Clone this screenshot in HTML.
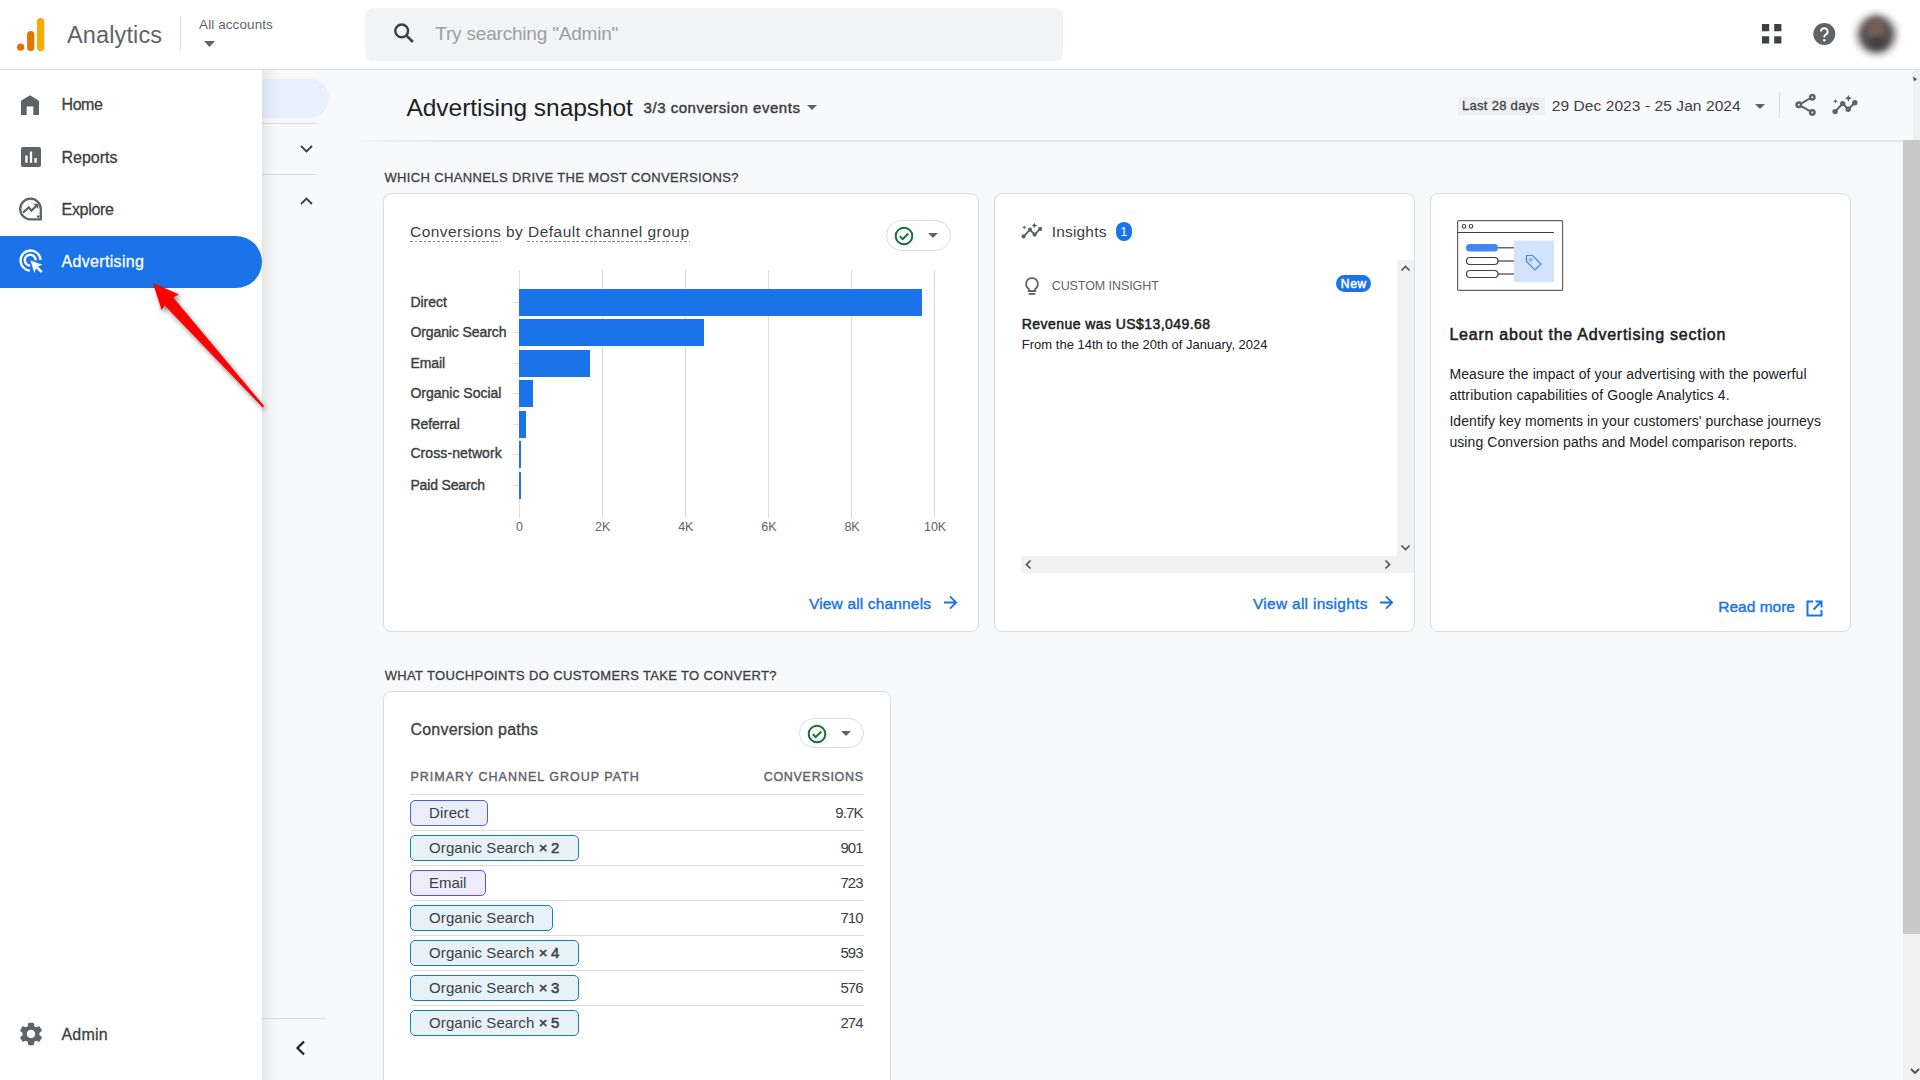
<!DOCTYPE html>
<html><head><meta charset="utf-8">
<style>
*{box-sizing:border-box;margin:0;padding:0}
html,body{width:1920px;height:1080px;overflow:hidden;background:#f8f9fa;font-family:"Liberation Sans",sans-serif;color:#3c4043}
.a{position:absolute}
.tx{white-space:pre}
svg.a{overflow:visible}
</style></head><body>
<div class="a tx" style="left:384.40px;top:168px;font-size:13px;line-height:19px;color:#3c4043;-webkit-text-stroke:0.3px #3c4043;letter-spacing:0.366px;">WHICH CHANNELS DRIVE THE MOST CONVERSIONS?</div>
<div class="a tx" style="left:384.70px;top:666px;font-size:13px;line-height:19px;color:#3c4043;-webkit-text-stroke:0.3px #3c4043;letter-spacing:0.349px;">WHAT TOUCHPOINTS DO CUSTOMERS TAKE TO CONVERT?</div>
<div class="a" style="left:383px;top:193px;width:596px;height:439px;background:#fff;border:1px solid #dadce0;border-radius:8px;"></div>
<div class="a tx" style="left:410.00px;top:221px;font-size:15.5px;line-height:21px;color:#3c4043;letter-spacing:0.464px;">Conversions by Default channel group</div>
<div class="a" style="left:410px;top:241px;width:91px;height:1px;background:repeating-linear-gradient(90deg,#80868b 0 2.5px,transparent 2.5px 4.5px)"></div>
<div class="a" style="left:527px;top:241px;width:163px;height:1px;background:repeating-linear-gradient(90deg,#80868b 0 2.5px,transparent 2.5px 4.5px)"></div>
<div class="a" style="left:886px;top:220px;width:65px;height:31px;background:#fff;border:1px solid #dadce0;border-radius:15.5px;"></div>
<svg class="a" style="left:894px;top:226px;" width="20" height="20" viewBox="0 0 20 20"><circle cx="10" cy="10" r="8.3" fill="none" stroke="#137333" stroke-width="2"/><path d="M5.8 10.2l2.9 2.9 5.6-5.6" fill="none" stroke="#137333" stroke-width="2"/></svg>
<svg class="a" style="left:928px;top:233px;" width="10" height="5" viewBox="0 0 10 5"><path d="M0 0h10L5 5z" fill="#5f6368"/></svg>
<div class="a" style="left:519px;top:270px;width:1px;height:248px;background:#dadce0;"></div>
<div class="a" style="left:602px;top:270px;width:1px;height:248px;background:#dadce0;"></div>
<div class="a" style="left:685px;top:270px;width:1px;height:248px;background:#dadce0;"></div>
<div class="a" style="left:768px;top:270px;width:1px;height:248px;background:#dadce0;"></div>
<div class="a" style="left:851px;top:270px;width:1px;height:248px;background:#dadce0;"></div>
<div class="a" style="left:934px;top:270px;width:1px;height:248px;background:#dadce0;"></div>
<div class="a" style="left:513px;top:302px;width:6px;height:1px;background:#dadce0;"></div>
<div class="a" style="left:519px;top:289px;width:403px;height:27px;background:#1a73e8;"></div>
<div class="a tx" style="left:410.40px;top:292px;font-size:14px;line-height:20px;color:#3c4043;-webkit-text-stroke:0.4px #3c4043;letter-spacing:-0.030px;">Direct</div>
<div class="a" style="left:513px;top:332px;width:6px;height:1px;background:#dadce0;"></div>
<div class="a" style="left:519px;top:319px;width:185px;height:27px;background:#1a73e8;"></div>
<div class="a tx" style="left:410.40px;top:322px;font-size:14px;line-height:20px;color:#3c4043;-webkit-text-stroke:0.4px #3c4043;letter-spacing:-0.096px;">Organic Search</div>
<div class="a" style="left:513px;top:363px;width:6px;height:1px;background:#dadce0;"></div>
<div class="a" style="left:519px;top:350px;width:71px;height:27px;background:#1a73e8;"></div>
<div class="a tx" style="left:410.40px;top:353px;font-size:14px;line-height:20px;color:#3c4043;-webkit-text-stroke:0.4px #3c4043;letter-spacing:-0.075px;">Email</div>
<div class="a" style="left:513px;top:393px;width:6px;height:1px;background:#dadce0;"></div>
<div class="a" style="left:519px;top:380px;width:14px;height:27px;background:#1a73e8;"></div>
<div class="a tx" style="left:410.40px;top:383px;font-size:14px;line-height:20px;color:#3c4043;-webkit-text-stroke:0.4px #3c4043;">Organic Social</div>
<div class="a" style="left:513px;top:424px;width:6px;height:1px;background:#dadce0;"></div>
<div class="a" style="left:519px;top:411px;width:7px;height:27px;background:#1a73e8;"></div>
<div class="a tx" style="left:410.40px;top:414px;font-size:14px;line-height:20px;color:#3c4043;-webkit-text-stroke:0.4px #3c4043;letter-spacing:-0.064px;">Referral</div>
<div class="a" style="left:513px;top:454px;width:6px;height:1px;background:#dadce0;"></div>
<div class="a" style="left:519px;top:441px;width:2px;height:27px;background:#1a73e8;"></div>
<div class="a tx" style="left:410.40px;top:443px;font-size:14px;line-height:20px;color:#3c4043;-webkit-text-stroke:0.4px #3c4043;letter-spacing:0.092px;">Cross-network</div>
<div class="a" style="left:513px;top:485px;width:6px;height:1px;background:#dadce0;"></div>
<div class="a" style="left:519px;top:472px;width:2px;height:27px;background:#1a73e8;"></div>
<div class="a tx" style="left:410.40px;top:475px;font-size:14px;line-height:20px;color:#3c4043;-webkit-text-stroke:0.4px #3c4043;letter-spacing:-0.165px;">Paid Search</div>
<div class="a tx" style="left:516.10px;top:518px;font-size:12.5px;line-height:18px;color:#5f6368;">0</div>
<div class="a tx" style="left:595.08px;top:518px;font-size:12.5px;line-height:18px;color:#5f6368;">2K</div>
<div class="a tx" style="left:678.17px;top:518px;font-size:12.5px;line-height:18px;color:#5f6368;">4K</div>
<div class="a tx" style="left:761.27px;top:518px;font-size:12.5px;line-height:18px;color:#5f6368;">6K</div>
<div class="a tx" style="left:844.38px;top:518px;font-size:12.5px;line-height:18px;color:#5f6368;">8K</div>
<div class="a tx" style="left:923.98px;top:518px;font-size:12.5px;line-height:18px;color:#5f6368;">10K</div>
<div class="a tx" style="left:809.00px;top:593px;font-size:15.5px;line-height:21px;color:#1a73e8;-webkit-text-stroke:0.4px #1a73e8;letter-spacing:0.156px;">View all channels</div>
<svg class="a" style="left:943px;top:595px;" width="15" height="15" viewBox="0 0 15 15"><path d="M1 7.5h12.3M7 1.3l6.2 6.2L7 13.7" fill="none" stroke="#1a73e8" stroke-width="1.8"/></svg>
<div class="a" style="left:994px;top:193px;width:421px;height:439px;background:#fff;border:1px solid #dadce0;border-radius:8px;"></div>
<svg class="a" style="left:1020px;top:220px;" width="24" height="20" viewBox="0 0 24 20"><path d="M3.6 16.4L10 9.6 14.6 14.6 20.1 8.9" fill="none" stroke="#5f6368" stroke-width="1.8"/><circle cx="3.6" cy="16.4" r="2.1" fill="#5f6368"/><circle cx="10" cy="9.6" r="2.1" fill="#5f6368"/><circle cx="14.6" cy="14.6" r="2.1" fill="#5f6368"/><circle cx="20.1" cy="8.9" r="2.1" fill="#5f6368"/><path d="M14.4 2.7Q14.886000000000001 4.914000000000001 17.1 5.4Q14.886000000000001 5.886 14.4 8.100000000000001Q13.914 5.886 11.7 5.4Q13.914 4.914000000000001 14.4 2.7Z" fill="#5f6368"/><path d="M4.3 5.6Q4.6419999999999995 7.158 6.199999999999999 7.5Q4.6419999999999995 7.842 4.3 9.4Q3.9579999999999997 7.842 2.4 7.5Q3.9579999999999997 7.158 4.3 5.6Z" fill="#5f6368"/></svg>
<div class="a tx" style="left:1051.70px;top:221px;font-size:15.5px;line-height:21px;color:#3c4043;letter-spacing:0.186px;">Insights</div>
<div class="a" style="left:1116px;top:222px;width:16px;height:19px;background:#1a73e8;border-radius:8px;"></div>
<div class="a tx" style="left:1120.62px;top:223px;font-size:12px;line-height:18px;color:#fff;">1</div>
<div class="a" style="left:1397px;top:260px;width:17px;height:296px;background:#f1f1f1;"></div>
<svg class="a" style="left:1401px;top:265px;" width="9" height="6" viewBox="0 0 9 6"><path d="M0.5 5.5L4.5 1.5l4 4" fill="none" stroke="#505050" stroke-width="1.6"/></svg>
<svg class="a" style="left:1401px;top:545px;" width="9" height="6" viewBox="0 0 9 6"><path d="M0.5 0.5L4.5 4.5l4-4" fill="none" stroke="#505050" stroke-width="1.6"/></svg>
<div class="a" style="left:1021px;top:556px;width:393px;height:17px;background:#f1f1f1;"></div>
<svg class="a" style="left:1025px;top:560px;" width="6" height="9" viewBox="0 0 6 9"><path d="M5.5 0.5L1.5 4.5l4 4" fill="none" stroke="#505050" stroke-width="1.6"/></svg>
<svg class="a" style="left:1385px;top:560px;" width="6" height="9" viewBox="0 0 6 9"><path d="M0.5 0.5L4.5 4.5l-4 4" fill="none" stroke="#505050" stroke-width="1.6"/></svg>
<svg class="a" style="left:1024px;top:277px;" width="16" height="19" viewBox="0 0 16 19"><path d="M8 1.2a5.8 5.8 0 0 0-3.3 10.6V14h6.6v-2.2A5.8 5.8 0 0 0 8 1.2z" fill="none" stroke="#5f6368" stroke-width="1.8"/><rect x="4.7" y="16" width="6.6" height="1.8" fill="#5f6368"/></svg>
<div class="a tx" style="left:1051.70px;top:277px;font-size:12.5px;line-height:18px;color:#5f6368;letter-spacing:-0.077px;">CUSTOM INSIGHT</div>
<div class="a" style="left:1336px;top:275px;width:35px;height:17px;background:#1a73e8;border-radius:9px;"></div>
<div class="a tx" style="left:1340.85px;top:275px;font-size:12px;line-height:18px;color:#fff;-webkit-text-stroke:0.5px #fff;letter-spacing:0.650px;">New</div>
<div class="a tx" style="left:1021.80px;top:314px;font-size:14px;line-height:20px;color:#202124;-webkit-text-stroke:0.5px #202124;letter-spacing:0.433px;">Revenue was US$13,049.68</div>
<div class="a tx" style="left:1021.80px;top:335px;font-size:13px;line-height:19px;color:#202124;letter-spacing:0.007px;">From the 14th to the 20th of January, 2024</div>
<div class="a tx" style="left:1253.00px;top:593px;font-size:15.5px;line-height:21px;color:#1a73e8;-webkit-text-stroke:0.4px #1a73e8;letter-spacing:0.275px;">View all insights</div>
<svg class="a" style="left:1379px;top:595px;" width="15" height="15" viewBox="0 0 15 15"><path d="M1 7.5h12.3M7 1.3l6.2 6.2L7 13.7" fill="none" stroke="#1a73e8" stroke-width="1.8"/></svg>
<div class="a" style="left:1430px;top:193px;width:421px;height:439px;background:#fff;border:1px solid #dadce0;border-radius:8px;"></div>
<svg class="a" style="left:1456px;top:219px;" width="108" height="73" viewBox="0 0 108 73"><rect x="1.6" y="1.6" width="105" height="69.8" rx="1" fill="#fff" stroke="#5f6368" stroke-width="1.2"/>
<line x1="1.6" y1="13.5" x2="98" y2="13.5" stroke="#3c4043" stroke-width="1.1"/>
<circle cx="8" cy="7.3" r="1.8" fill="none" stroke="#3c4043" stroke-width="1.1"/><circle cx="15" cy="7.3" r="1.8" fill="none" stroke="#3c4043" stroke-width="1.1"/>
<rect x="58" y="21.5" width="40" height="41.5" fill="#d2e3fc"/>
<rect x="10" y="25" width="32" height="7.5" rx="3.75" fill="#4285f4"/>
<line x1="42" y1="28.8" x2="58" y2="28.8" stroke="#3c4043" stroke-width="1.2"/>
<rect x="10.5" y="38.5" width="31.5" height="7" rx="3.5" fill="#fff" stroke="#3c4043" stroke-width="1.2"/>
<line x1="42" y1="42" x2="58" y2="42" stroke="#3c4043" stroke-width="1.2"/>
<rect x="10.5" y="51.5" width="31.5" height="7" rx="3.5" fill="#fff" stroke="#3c4043" stroke-width="1.2"/>
<line x1="42" y1="55" x2="58" y2="55" stroke="#3c4043" stroke-width="1.2"/>
<path d="M70.5 36.5h6l8.5 8.5-6 6-8.5-8.5z" fill="none" stroke="#4285f4" stroke-width="1.2"/><circle cx="74.6" cy="40.8" r="1.3" fill="none" stroke="#4285f4" stroke-width="0.9"/></svg>
<div class="a tx" style="left:1449.40px;top:324px;font-size:16px;line-height:21px;color:#202124;-webkit-text-stroke:0.55px #202124;letter-spacing:0.765px;">Learn about the Advertising section</div>
<div class="a tx" style="left:1449.40px;top:364px;font-size:14px;line-height:20px;color:#202124;letter-spacing:0.128px;">Measure the impact of your advertising with the powerful</div>
<div class="a tx" style="left:1449.40px;top:385px;font-size:14px;line-height:20px;color:#202124;letter-spacing:0.135px;">attribution capabilities of Google Analytics 4.</div>
<div class="a tx" style="left:1449.40px;top:411px;font-size:14px;line-height:20px;color:#202124;letter-spacing:0.070px;">Identify key moments in your customers' purchase journeys</div>
<div class="a tx" style="left:1449.40px;top:432px;font-size:14px;line-height:20px;color:#202124;letter-spacing:0.091px;">using Conversion paths and Model comparison reports.</div>
<div class="a tx" style="left:1718.30px;top:596px;font-size:15.5px;line-height:21px;color:#1a73e8;-webkit-text-stroke:0.4px #1a73e8;letter-spacing:-0.006px;">Read more</div>
<svg class="a" style="left:1806px;top:600px;" width="17" height="17" viewBox="0 0 17 17"><path d="M7 1.5H1.5v14h14V10" fill="none" stroke="#1a73e8" stroke-width="2"/><path d="M9.5 1.5h6v6M15.5 1.5L7.5 9.5" fill="none" stroke="#1a73e8" stroke-width="2"/></svg>
<div class="a" style="left:383px;top:691px;width:508px;height:420px;background:#fff;border:1px solid #dadce0;border-radius:8px;"></div>
<div class="a tx" style="left:410.50px;top:719px;font-size:16px;line-height:21px;color:#3c4043;-webkit-text-stroke:0.3px #3c4043;letter-spacing:0.200px;">Conversion paths</div>
<div class="a" style="left:799px;top:718px;width:65px;height:30px;background:#fff;border:1px solid #dadce0;border-radius:15.0px;"></div>
<svg class="a" style="left:807px;top:724px;" width="20" height="20" viewBox="0 0 20 20"><circle cx="10" cy="10" r="8.3" fill="none" stroke="#137333" stroke-width="2"/><path d="M5.8 10.2l2.9 2.9 5.6-5.6" fill="none" stroke="#137333" stroke-width="2"/></svg>
<svg class="a" style="left:841px;top:731px;" width="10" height="5" viewBox="0 0 10 5"><path d="M0 0h10L5 5z" fill="#5f6368"/></svg>
<div class="a tx" style="left:410.50px;top:768px;font-size:12.5px;line-height:18px;color:#5f6368;-webkit-text-stroke:0.4px #5f6368;letter-spacing:1.002px;">PRIMARY CHANNEL GROUP PATH</div>
<div class="a tx" style="left:763.70px;top:768px;font-size:12.5px;line-height:18px;color:#5f6368;-webkit-text-stroke:0.4px #5f6368;letter-spacing:0.705px;">CONVERSIONS</div>
<div class="a" style="left:410px;top:794px;width:454px;height:1px;background:#dadce0;"></div>
<div class="a" style="left:410px;top:800px;width:78px;height:26px;background:#eaedfa;border:1px solid #4a63e6;border-radius:5px;"></div>
<div class="a tx" style="left:429.10px;top:802px;font-size:15px;line-height:21px;color:#3c4043;letter-spacing:0.130px;">Direct</div>
<div class="a tx" style="left:835.30px;top:802px;font-size:15px;line-height:21px;color:#3c4043;letter-spacing:-0.850px;">9.7K</div>
<div class="a" style="left:410px;top:830px;width:454px;height:1px;background:#dadce0;"></div>
<div class="a" style="left:410px;top:835px;width:169px;height:26px;background:#e6f1f8;border:1px solid #1a7bbd;border-radius:5px;"></div>
<div class="a tx" style="left:429.10px;top:837px;font-size:15px;line-height:21px;color:#3c4043;letter-spacing:0.073px;">Organic Search</div>
<div class="a tx" style="left:538.75px;top:837px;font-size:15px;line-height:21px;color:#3c4043;-webkit-text-stroke:0.5px #3c4043;letter-spacing:-0.375px;">× 2</div>
<div class="a tx" style="left:840.50px;top:837px;font-size:15px;line-height:21px;color:#3c4043;letter-spacing:-1.000px;">901</div>
<div class="a" style="left:410px;top:865px;width:454px;height:1px;background:#dadce0;"></div>
<div class="a" style="left:410px;top:870px;width:76px;height:26px;background:#eeecfb;border:1px solid #5b4cf0;border-radius:5px;"></div>
<div class="a tx" style="left:429.10px;top:872px;font-size:15px;line-height:21px;color:#3c4043;letter-spacing:-0.075px;">Email</div>
<div class="a tx" style="left:840.50px;top:872px;font-size:15px;line-height:21px;color:#3c4043;letter-spacing:-1.000px;">723</div>
<div class="a" style="left:410px;top:900px;width:454px;height:1px;background:#dadce0;"></div>
<div class="a" style="left:410px;top:905px;width:143px;height:26px;background:#e6f1f8;border:1px solid #1a7bbd;border-radius:5px;"></div>
<div class="a tx" style="left:429.10px;top:907px;font-size:15px;line-height:21px;color:#3c4043;letter-spacing:0.073px;">Organic Search</div>
<div class="a tx" style="left:840.50px;top:907px;font-size:15px;line-height:21px;color:#3c4043;letter-spacing:-1.000px;">710</div>
<div class="a" style="left:410px;top:935px;width:454px;height:1px;background:#dadce0;"></div>
<div class="a" style="left:410px;top:940px;width:169px;height:26px;background:#e6f1f8;border:1px solid #1a7bbd;border-radius:5px;"></div>
<div class="a tx" style="left:429.10px;top:942px;font-size:15px;line-height:21px;color:#3c4043;letter-spacing:0.073px;">Organic Search</div>
<div class="a tx" style="left:538.75px;top:942px;font-size:15px;line-height:21px;color:#3c4043;-webkit-text-stroke:0.5px #3c4043;letter-spacing:-0.375px;">× 4</div>
<div class="a tx" style="left:840.50px;top:942px;font-size:15px;line-height:21px;color:#3c4043;letter-spacing:-1.000px;">593</div>
<div class="a" style="left:410px;top:970px;width:454px;height:1px;background:#dadce0;"></div>
<div class="a" style="left:410px;top:975px;width:169px;height:26px;background:#e6f1f8;border:1px solid #1a7bbd;border-radius:5px;"></div>
<div class="a tx" style="left:429.10px;top:977px;font-size:15px;line-height:21px;color:#3c4043;letter-spacing:0.073px;">Organic Search</div>
<div class="a tx" style="left:538.75px;top:977px;font-size:15px;line-height:21px;color:#3c4043;-webkit-text-stroke:0.5px #3c4043;letter-spacing:-0.375px;">× 3</div>
<div class="a tx" style="left:840.50px;top:977px;font-size:15px;line-height:21px;color:#3c4043;letter-spacing:-1.000px;">576</div>
<div class="a" style="left:410px;top:1005px;width:454px;height:1px;background:#dadce0;"></div>
<div class="a" style="left:410px;top:1010px;width:169px;height:26px;background:#e6f1f8;border:1px solid #1a7bbd;border-radius:5px;"></div>
<div class="a tx" style="left:429.10px;top:1012px;font-size:15px;line-height:21px;color:#3c4043;letter-spacing:0.073px;">Organic Search</div>
<div class="a tx" style="left:538.75px;top:1012px;font-size:15px;line-height:21px;color:#3c4043;-webkit-text-stroke:0.5px #3c4043;letter-spacing:-0.375px;">× 5</div>
<div class="a tx" style="left:840.50px;top:1012px;font-size:15px;line-height:21px;color:#3c4043;letter-spacing:-1.000px;">274</div>
<div class="a" style="left:1903px;top:70px;width:17px;height:1010px;background:#f1f1f1;"></div>
<div class="a" style="left:1903px;top:140px;width:17px;height:794px;background:#c8c8c8;"></div>
<svg class="a" style="left:1910px;top:1068px;" width="10" height="7" viewBox="0 0 10 7"><path d="M1 1l4 4 4-4" fill="none" stroke="#505050" stroke-width="1.8"/></svg>
<div class="a" style="left:352px;top:70px;width:1561px;height:70px;background:#f8f9fa;z-index:3"></div>
<div class="a" style="left:352px;top:140px;width:1551px;height:3px;z-index:3;background:linear-gradient(180deg,rgba(60,64,67,.16),rgba(60,64,67,0));-webkit-mask-image:linear-gradient(90deg,transparent 0,#000 90px)"></div>
<svg class="a" style="left:1912px;top:76px;z-index:4" width="6" height="6" viewBox="0 0 6 6"><path d="M0.5 0.5l4.5 2.5-2.5 2.5z" fill="#505050"/></svg>
<div class="a tx" style="left:406.50px;top:92px;font-size:24.5px;line-height:31px;color:#202124;letter-spacing:-0.053px;z-index:4;">Advertising snapshot</div>
<div class="a tx" style="left:643.60px;top:97px;font-size:15px;line-height:21px;color:#3c4043;-webkit-text-stroke:0.45px #3c4043;letter-spacing:0.520px;z-index:4;">3/3 conversion events</div>
<svg class="a" style="left:807px;top:105px;z-index:4" width="10" height="5" viewBox="0 0 10 5"><path d="M0 0h10L5 5z" fill="#5f6368"/></svg>
<div class="a" style="left:1458px;top:97px;width:87px;height:18px;background:#eeeff1;z-index:4;"></div>
<div class="a tx" style="left:1462.00px;top:96px;font-size:13px;line-height:19px;color:#3c4043;-webkit-text-stroke:0.3px #3c4043;letter-spacing:0.295px;z-index:4;">Last 28 days</div>
<div class="a tx" style="left:1551.70px;top:95px;font-size:15.5px;line-height:21px;color:#3c4043;letter-spacing:0.083px;z-index:4;">29 Dec 2023 - 25 Jan 2024</div>
<svg class="a" style="left:1755px;top:104px;z-index:4" width="10" height="5" viewBox="0 0 10 5"><path d="M0 0h10L5 5z" fill="#5f6368"/></svg>
<div class="a" style="left:1779px;top:92px;width:1px;height:26px;background:#dadce0;z-index:4;"></div>
<svg class="a" style="left:1795px;top:94px;z-index:4" width="22" height="22" viewBox="0 0 22 22"><path d="M3.8 10.8L17.3 3.2M3.8 10.8L17.3 18.4" stroke="#5f6368" stroke-width="2"/><circle cx="17.3" cy="3.2" r="2.2" fill="#fff" stroke="#5f6368" stroke-width="2.5"/><circle cx="3.8" cy="10.8" r="2.2" fill="#fff" stroke="#5f6368" stroke-width="2.5"/><circle cx="17.3" cy="18.4" r="2.2" fill="#fff" stroke="#5f6368" stroke-width="2.5"/></svg>
<svg class="a" style="left:1830px;top:92px;z-index:4" width="30" height="24" viewBox="0 0 30 24"><path d="M5.1 19.6L12.7 11.6 18.2 17.3 24.8 10.8" fill="none" stroke="#5f6368" stroke-width="2.1"/><circle cx="5.1" cy="19.6" r="2.7" fill="#5f6368"/><circle cx="12.7" cy="11.6" r="2.7" fill="#5f6368"/><circle cx="18.2" cy="17.3" r="2.7" fill="#5f6368"/><circle cx="24.8" cy="10.8" r="2.7" fill="#5f6368"/><path d="M18.4 3.05Q18.994 5.755999999999999 21.7 6.35Q18.994 6.944 18.4 9.649999999999999Q17.805999999999997 6.944 15.099999999999998 6.35Q17.805999999999997 5.755999999999999 18.4 3.05Z" fill="#5f6368"/><path d="M5.5 7.000000000000001Q5.914 8.886000000000001 7.8 9.3Q5.914 9.714 5.5 11.600000000000001Q5.086 9.714 3.2 9.3Q5.086 8.886000000000001 5.5 7.000000000000001Z" fill="#5f6368"/></svg>
<div class="a" style="left:230px;top:79px;width:99px;height:39px;background:#e8f0fe;border-radius:19.5px;z-index:2;"></div>
<div class="a" style="left:262px;top:123px;width:54px;height:1px;background:#dadce0;z-index:2;"></div>
<div class="a" style="left:262px;top:174px;width:54px;height:1px;background:#dadce0;z-index:2;"></div>
<svg class="a" style="left:300px;top:145px;z-index:2" width="13" height="8" viewBox="0 0 13 8"><path d="M1 1l5.5 5.5L12 1" fill="none" stroke="#3c4043" stroke-width="1.8"/></svg>
<svg class="a" style="left:300px;top:197px;z-index:2" width="13" height="8" viewBox="0 0 13 8"><path d="M1 7l5.5-5.5L12 7" fill="none" stroke="#3c4043" stroke-width="1.8"/></svg>
<div class="a" style="left:262px;top:1018px;width:64px;height:1px;background:#dadce0;z-index:2;"></div>
<svg class="a" style="left:295px;top:1040px;z-index:2" width="11" height="16" viewBox="0 0 11 16"><path d="M9 1.5L2.5 8 9 14.5" fill="none" stroke="#202124" stroke-width="2.2"/></svg>
<div class="a" style="left:0;top:0;width:1920px;height:70px;background:#fff;border-bottom:1px solid #dadce0;z-index:10">
<svg class="a" style="left:17px;top:18px;" width="28" height="33" viewBox="0 0 28 33"><circle cx="3.6" cy="29.2" r="3.6" fill="#e37400"/><rect x="10.1" y="13" width="7.2" height="20" rx="3.6" fill="#e37400"/><rect x="20" y="0" width="7.2" height="33" rx="3.6" fill="#f9ab00"/></svg>
<div class="a tx" style="left:67.00px;top:20px;font-size:23.5px;line-height:30px;color:#5f6368;letter-spacing:0.125px;">Analytics</div>
<div class="a" style="left:180px;top:17px;width:1px;height:34px;background:#dadce0;"></div>
<div class="a tx" style="left:199.10px;top:15px;font-size:13.5px;line-height:19px;color:#5f6368;letter-spacing:0.086px;">All accounts</div>
<svg class="a" style="left:204px;top:41px;" width="11" height="6" viewBox="0 0 11 6"><path d="M0 0h11L5.5 6z" fill="#5f6368"/></svg>
<div class="a" style="left:365px;top:8px;width:698px;height:53px;background:#f1f3f4;border-radius:8px;"></div>
<svg class="a" style="left:390px;top:20px;" width="26" height="26" viewBox="0 0 26 26"><circle cx="11.7" cy="10.85" r="6.4" fill="none" stroke="#3c4043" stroke-width="2.4"/><path d="M16.3 15.4l6.6 6.6" stroke="#3c4043" stroke-width="2.6"/></svg>
<div class="a tx" style="left:435.30px;top:21px;font-size:19px;line-height:25px;color:#9aa0a6;letter-spacing:-0.200px;">Try searching "Admin"</div>
<svg class="a" style="left:1762px;top:24px;" width="20" height="20" viewBox="0 0 20 20"><path fill="#3c4043" d="M0 0h7.2v7.2H0zM12.2 0h7.2v7.2h-7.2zM0 12.2h7.2v7.2H0zM12.2 12.2h7.2v7.2h-7.2z"/></svg>
<svg class="a" style="left:1813px;top:23px;" width="23" height="23" viewBox="0 0 23 23"><circle cx="11.3" cy="11" r="11" fill="#5f6368"/><path d="M8 8.6a3.3 3.3 0 1 1 4.6 3c-.9.5-1.3 1-1.3 2.2v.4" fill="none" stroke="#fff" stroke-width="1.9"/><circle cx="11.3" cy="17.3" r="1.2" fill="#fff"/></svg>
<div class="a" style="left:1858px;top:16px;width:37px;height:37px;border-radius:50%;background:#4a4649;filter:blur(4px)"></div>
<div class="a" style="left:1866px;top:18px;width:20px;height:28px;border-radius:50%;background:#76605a;filter:blur(3px)"></div>
<div class="a" style="left:1868px;top:36px;width:18px;height:12px;border-radius:50%;background:#3e3d40;filter:blur(3px)"></div>
</div>
<div class="a" style="left:0;top:70px;width:262px;height:1010px;background:#fff;z-index:8">
</div>
<div class="a" style="left:262px;top:70px;width:20px;height:1010px;z-index:8;background:linear-gradient(90deg,rgba(60,64,67,.11) 0,rgba(60,64,67,.075) 3px,rgba(60,64,67,.04) 8px,rgba(60,64,67,.015) 13px,rgba(60,64,67,0) 18px)"></div>
<div class="a" style="left:0;top:0;width:262px;height:1080px;z-index:9">
<div class="a" style="left:0px;top:236px;width:262px;height:52px;background:#1a73e8;border-radius:0 26px 26px 0;"></div>
<svg class="a" style="left:21px;top:95px;" width="18" height="20" viewBox="0 0 18 20"><path d="M9 0.3L18 5.7V20H12.3V11.6H5.7V20H0V5.7Z" fill="#5f6368"/></svg>
<div class="a tx" style="left:61.50px;top:94px;font-size:16px;line-height:21px;color:#3c4043;-webkit-text-stroke:0.3px #3c4043;letter-spacing:-0.417px;">Home</div>
<svg class="a" style="left:20.5px;top:147px;" width="20" height="20" viewBox="0 0 20 20"><rect x="0" y="0" width="20" height="20" rx="2" fill="#5f6368"/><rect x="4.3" y="8.5" width="2.3" height="7.3" fill="#fff"/><rect x="8.85" y="4.5" width="2.3" height="11.3" fill="#fff"/><rect x="13.4" y="11" width="2.3" height="4.8" fill="#fff"/></svg>
<div class="a tx" style="left:61.50px;top:147px;font-size:16px;line-height:21px;color:#3c4043;-webkit-text-stroke:0.3px #3c4043;">Reports</div>
<svg class="a" style="left:19px;top:197px;" width="24" height="24" viewBox="0 0 24 24"><path d="M11.5 1.7A10.3 10.3 0 1 0 11.5 22.3H21.8V12A10.3 10.3 0 0 0 11.5 1.7Z" fill="none" stroke="#5f6368" stroke-width="2.3"/><path d="M4 15.6L9.8 10.4 12.4 13.7 17.2 8.9" fill="none" stroke="#5f6368" stroke-width="2.2"/><path d="M14.2 6.8H19.4V12Z" fill="#5f6368"/><circle cx="19.2" cy="19.6" r="1.3" fill="#5f6368"/></svg>
<div class="a tx" style="left:61.50px;top:199px;font-size:16px;line-height:21px;color:#3c4043;-webkit-text-stroke:0.3px #3c4043;letter-spacing:-0.292px;">Explore</div>
<svg class="a" style="left:19.5px;top:250px;" width="24" height="24" viewBox="0 0 24 24"><path d="M20.5 9.8A10 10 0 1 0 9.8 20.5" fill="none" stroke="#fff" stroke-width="2.4"/><path d="M15.6 10.2A5.4 5.4 0 1 0 10.2 15.6" fill="none" stroke="#fff" stroke-width="2.4"/><path d="M10.5 10.5l12 4.3-4.6 1.6 4.8 4.8-1.9 1.9-4.8-4.8-1.6 4.6z" fill="#fff"/></svg>
<div class="a tx" style="left:61.50px;top:251px;font-size:16px;line-height:21px;color:#fff;-webkit-text-stroke:0.3px #fff;letter-spacing:0.325px;">Advertising</div>
<svg class="a" style="left:17.2px;top:1020px;" width="28" height="28" viewBox="0 0 24 24"><path fill="#5f6368" d="M19.14 12.94c.04-.3.06-.61.06-.94 0-.32-.02-.64-.07-.94l2.03-1.58a.49.49 0 0 0 .12-.61l-1.92-3.32a.488.488 0 0 0-.59-.22l-2.39.96c-.5-.38-1.03-.7-1.62-.94l-.36-2.54a.484.484 0 0 0-.48-.41h-3.84c-.24 0-.43.17-.47.41l-.36 2.54c-.59.24-1.13.57-1.62.94l-2.39-.96c-.22-.08-.47 0-.59.22L2.74 8.87c-.12.21-.08.47.12.61l2.03 1.58c-.05.3-.09.63-.09.94s.02.64.07.94l-2.03 1.58a.49.49 0 0 0-.12.61l1.92 3.32c.12.22.37.29.59.22l2.39-.96c.5.38 1.03.7 1.62.94l.36 2.54c.05.24.24.41.48.41h3.84c.24 0 .44-.17.47-.41l.36-2.54c.59-.24 1.130-.56 1.62-.94l2.39.96c.22.08.47 0 .59-.22l1.920-3.32c.12-.22.07-.47-.12-.61l-2.01-1.58zM12 15.6c-1.98 0-3.6-1.62-3.6-3.6s1.62-3.6 3.6-3.6 3.6 1.62 3.6 3.6-1.62 3.6-3.6 3.6z"/></svg>
<div class="a tx" style="left:61.50px;top:1024px;font-size:16px;line-height:21px;color:#3c4043;-webkit-text-stroke:0.3px #3c4043;letter-spacing:0.188px;">Admin</div>
</div>
<svg class="a" style="left:0;top:0;z-index:20" width="1920" height="1080" viewBox="0 0 1920 1080"><defs><filter id="sh" x="-30%" y="-30%" width="160%" height="160%"><feGaussianBlur stdDeviation="2.6"/></filter></defs><path d="M153 283 L179 294.4 L173.2 297.4 L264.2 406.2 L262.6 407.4 L164.8 305.4 L161.6 310 Z" fill="rgba(0,0,0,.45)" transform="translate(2 3)" filter="url(#sh)"/><path d="M153 283 L179 294.4 L173.2 297.4 L264.2 406.2 L262.6 407.4 L164.8 305.4 L161.6 310 Z" fill="#ff0000"/></svg>
</body></html>
